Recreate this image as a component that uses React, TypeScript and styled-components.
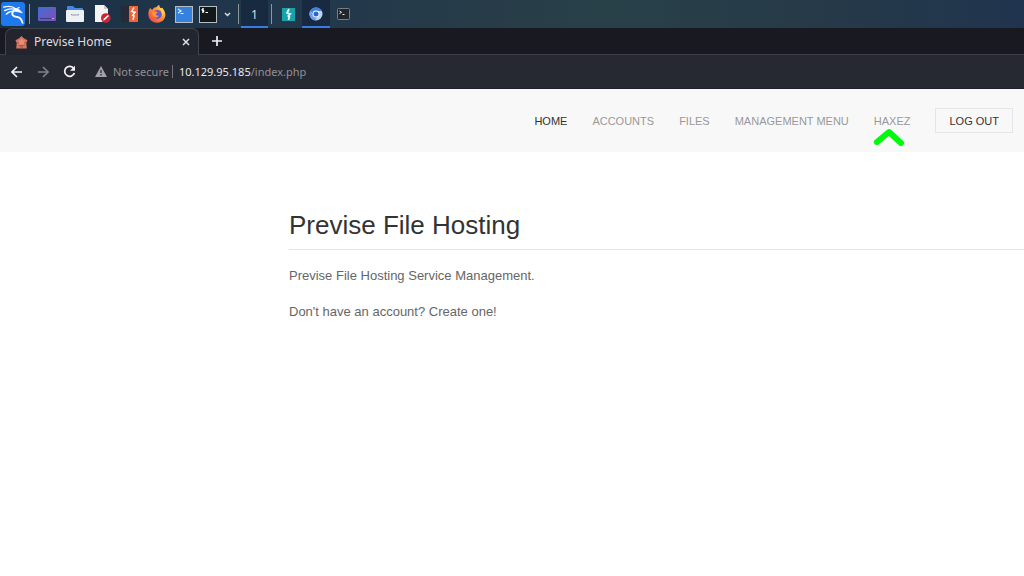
import React from 'react';
import styled, { createGlobalStyle } from 'styled-components';

const GlobalStyle = createGlobalStyle`
  *, *::before, *::after { box-sizing: border-box; }
  body { margin: 0; background: #fff; font-family: "Liberation Sans", Arial, sans-serif; }
  button { margin: 0; padding: 0; border: 0; background: none; font: inherit; color: inherit; }
  a { color: inherit; text-decoration: none; }
  svg { display: block; flex: none; }
`;

const Panel = styled.header`
  display: flex;
  align-items: center;
  height: 28px;
  background: linear-gradient(90deg, #1b3046 0%, #22384c 30%, #273c48 48%, #284149 60%, #263a48 78%, #20344f 100%);
  color: #d7dde2;
  font: 12px "Noto Sans", sans-serif;
`;

const PanelButton = styled.button<{ $width?: number; $active?: boolean }>`
  display: flex;
  align-items: center;
  justify-content: center;
  width: ${p => p.$width ?? 27}px;
  height: 28px;
  border-top: 2px solid transparent;
  border-bottom: 2px solid ${p => (p.$active ? '#397be0' : 'transparent')};
  background: ${p => (p.$active ? '#182a40' : 'transparent')};
`;

const PanelDivider = styled.span`
  width: 1px;
  height: 20px;
  margin: 0 2px 0 3px;
  background: #8a979f;
`;

const TabStrip = styled.div`
  display: flex;
  height: 27px;
  padding-left: 5px;
  background: #181921;
  border-bottom: 1px solid #3c4048;
`;

const Tab = styled.div`
  display: flex;
  align-items: center;
  width: 194px;
  height: 27px;
  padding: 0 4px 0 9px;
  border: 1px solid #40454d;
  border-bottom: 0;
  border-radius: 7px 7px 0 0;
  background: #22252d;
  color: #dcdde0;
  font: 12px "Noto Sans", sans-serif;
`;

const TabTitle = styled.span`
  flex: 1;
  padding: 0 0 2px 6px;
`;

const IconButton = styled.button<{ $width?: number }>`
  display: flex;
  align-items: center;
  justify-content: center;
  width: ${p => p.$width ?? 16}px;
  height: 26px;
`;

const Toolbar = styled.div`
  display: flex;
  align-items: center;
  gap: 10px;
  height: 34px;
  padding-left: 9px;
  background: #262932;
  border-bottom: 1px solid #1e2027;
`;

const AddressBar = styled.form`
  display: flex;
  flex: 1;
  align-items: center;
  margin-left: 8px;
  color: #8f9297;
  font: 11px "Noto Sans", sans-serif;
`;

const Security = styled.span`
  padding: 0 3px 0 6px;
`;

const AddressDivider = styled.span`
  width: 1px;
  height: 13px;
  margin-right: 6px;
  background: #73767c;
`;

const Host = styled.span`
  color: #e6e7e9;
`;

const SiteNav = styled.nav`
  display: flex;
  align-items: center;
  justify-content: flex-end;
  gap: 25px;
  height: 63px;
  padding-right: 11px;
  background: #f8f8f8;
  font-size: 11px;
  text-transform: uppercase;
`;

const NavLink = styled.a<{ $active?: boolean }>`
  position: relative;
  color: ${p => (p.$active ? '#333' : '#999')};
`;

const Marker = styled.svg`
  position: absolute;
  top: 100%;
  left: -1px;
`;

const LogOut = styled.button`
  height: 25px;
  padding: 0 13px;
  border: 1px solid #e5e5e5;
  color: #333;
  text-transform: uppercase;
`;

const Content = styled.main`
  padding: 56px 0 0 289px;
  color: #666;
  font-size: 13px;
  line-height: 20px;
`;

const Heading = styled.h1`
  margin: 0 0 16px;
  padding-bottom: 7px;
  border-bottom: 1px solid #e5e5e5;
  color: #333;
  font-size: 26px;
  font-weight: 400;
  line-height: 34px;
`;

const Paragraph = styled.p`
  margin: 0 0 16px;
`;

const KaliIcon = () => (
  <svg width="24" height="24" viewBox="0 0 23 23" fill="none" stroke="#fff" strokeLinecap="round">
    <rect width="23" height="23" rx="3" fill="#1e79ed" stroke="none" />
    <path d="M2.5 5C7 3.6 11 4 14.5 6.7M3.5 8.3C8 6 12 6.5 15 8M5 11.7C7 9.6 9.5 8.7 12 8.7" strokeWidth="1.2" />
    <path d="M12 8.5C9 12 12 14 15 14.2C19 14.5 20 17.2 20.7 20" strokeWidth="1.7" />
    <path d="M13.5 6.2L17 7L20.5 10.2L18.5 10.1L16 9.3L13 9.2Z" fill="#fff" strokeWidth=".6" />
    <path d="M15.3 6.3L17.5 5.2" />
  </svg>
);

const DesktopIcon = () => (
  <svg width="18" height="16" viewBox="0 0 18 16">
    <defs><linearGradient id="screen" x2="1" y2="1"><stop stopColor="#436bd8" /><stop offset="1" stopColor="#824fb4" /></linearGradient></defs>
    <rect y="1" width="18" height="14" rx="1" fill="url(#screen)" />
    <path d="M2 12.5h11" stroke="#373d83" /><path d="M14 12.5h2" stroke="#b8a4dc" />
  </svg>
);

const FolderIcon = () => (
  <svg width="18" height="18" viewBox="0 0 18 18">
    <path d="M1 2q0-1 1-1h5l2 2h7q1 0 1 1v4H1z" fill="#4687df" />
    <rect y="5" width="18" height="12" rx="1" fill="#edf1f4" />
    <path d="M5.5 9v1h7V9" fill="none" stroke="#8c9ba7" />
  </svg>
);

const EditorIcon = () => (
  <svg width="18" height="18" viewBox="0 0 18 18">
    <path d="M2 0h9l4 4v13H2z" fill="#f4f4f4" /><path d="M11 0l4 4h-4z" fill="#c7cbce" />
    <circle cx="12.8" cy="13" r="4.8" fill="#ca2631" />
    <path d="M10.2 15.7l.7-2.1 4-3.7 1.1 1.1-3.9 3.8z" fill="#fff" />
  </svg>
);

const BurpIcon = () => (
  <svg width="17" height="16" viewBox="0 0 17 16">
    <rect width="17" height="16" rx="2" fill="#282a36" />
    <path d="M8 0h9v16H8z" fill="#f16336" />
    <path d="M13 1.5l-2.4 4 3.5.8-2.5 3.1 1.5.6-1.1 4" fill="none" stroke="#fff" strokeWidth="1.4" />
  </svg>
);

const FirefoxIcon = () => (
  <svg width="18" height="18" viewBox="0 0 18 18">
    <defs><linearGradient id="flame" x1="1" x2="0" y2="1"><stop stopColor="#ffe552" /><stop offset=".4" stopColor="#ff9b35" /><stop offset="1" stopColor="#ee354f" /></linearGradient></defs>
    <path d="M2 3L4.3 5C5 3 7 2 9 2C9 1 10.1 0 11.3 0C11.3 2 12.2 2.6 13.5 4L14 2.5C18 7 18.3 11 15.8 14.6C12.4 19.2 4.7 18.6 1.5 13.8C-.2 10.8 0 6.4 2 3Z" fill="url(#flame)" />
    <circle cx="9.4" cy="9.4" r="4.3" fill="#7057c7" />
    <path d="M4.3 7.3C6 6 8.5 6.4 10 7.7L8 8.6C7.5 10.3 9 11.2 10.8 10.5C9.5 13.5 5.7 13.2 4.7 10Z" fill="#ff953b" />
    <path d="M10.5 3C13 5 15 7.5 14 11C16.5 9 16.4 5.7 14 3Z" fill="#ffd34f" />
  </svg>
);

const TerminalIcon = ({ blue = false }: { blue?: boolean }) => (
  <svg width="18" height="17" viewBox="0 0 18 17">
    <rect x=".5" y=".5" width="17" height="16" fill={blue ? '#3481df' : '#101819'} stroke="#b5bdc2" />
    {blue
      ? <path d="M3 3l3 2-3 2M5.5 7.5h3" fill="none" stroke="#e7f1ff" strokeWidth="1.2" />
      : <path d="M4.8 3H3v1.5h1.8V6H3M4 2v5M6.5 6.5h2.5" fill="none" stroke="#fff" />}
  </svg>
);

const TealBurpIcon = () => (
  <svg width="13" height="13" viewBox="0 0 13 13">
    <rect width="13" height="13" fill="#19a2a8" />
    <path d="M7 1L5 5l3.3 1-2 2 1 .7-.8 3.3" fill="none" stroke="#f0ffff" strokeWidth="1.7" />
  </svg>
);

const ChromiumIcon = () => (
  <svg width="14" height="14" viewBox="0 0 14 14">
    <circle cx="7" cy="7" r="6.5" fill="#bdd2f5" />
    <path d="M1.3 3.7A6.5 6.5 0 0 1 12.8 4H7A3 3 0 0 0 4 7z" fill="#447fde" />
    <path d="M1.3 3.7A6.5 6.5 0 0 0 6 13.4L8.2 10 4 8z" fill="#6d9feb" />
    <circle cx="7" cy="7" r="3.4" fill="#fff" /><circle cx="7" cy="7" r="2.5" fill="#2868ce" />
  </svg>
);

const SmallTerminalIcon = () => (
  <svg width="13" height="12" viewBox="0 0 13 12">
    <rect x=".5" y=".5" width="12" height="11" rx="1" fill="#20262b" stroke="#788087" />
    <path d="M2.5 3l2 1.3-2 1.3M5.5 6.5h2" fill="none" stroke="#eceff1" />
  </svg>
);

const FavIcon = () => (
  <svg width="13" height="13" viewBox="0 0 13 13">
    <path d="M6.5 0l2.3 2.2 3.7 2-1.2 3 .5 5.3H1.2l.5-5.3-1.2-3 3.7-2z" fill="#d77562" />
    <path d="M6.5 2l1.2 2.3 2.8.4-2 1.9.5 2.7-2.5-1.2L4 9.3l.5-2.7-2-1.9 2.8-.4z" fill="#e88f79" />
    <path d="M1.5 6l2.3 1M11.5 6L9.2 7M3.5 9.5h6M5 11h3" fill="none" stroke="#96534a" strokeWidth=".8" />
  </svg>
);

const Arrow = ({ forward = false }: { forward?: boolean }) => (
  <svg width="12" height="12" viewBox="0 0 12 12" fill="none" stroke={forward ? '#7e8188' : '#f0f1f2'} strokeWidth="1.6">
    <path d={forward ? 'M1 6h10M6 1l5 5-5 5' : 'M11 6H1M6 1L1 6l5 5'} />
  </svg>
);

const ReloadIcon = () => (
  <svg width="13" height="13" viewBox="0 0 13 13">
    <path d="M10.8 3.5A5 5 0 1 0 11.4 8" fill="none" stroke="#f0f1f2" strokeWidth="1.8" />
    <path d="M12 .8v5H7z" fill="#f0f1f2" />
  </svg>
);

const WarningIcon = () => (
  <svg width="12" height="11" viewBox="0 0 12 11">
    <path d="M6 0l6 11H0z" fill="#a0a2a6" /><path d="M6 4v3M6 8v1.4" stroke="#262932" strokeWidth="1.2" />
  </svg>
);

export default function App() {
  return (
    <>
      <GlobalStyle />
      <Panel>
        <PanelButton $width={26} aria-label="Applications"><KaliIcon /></PanelButton>
        <PanelDivider />
        <PanelButton $width={30} aria-label="Show desktop"><DesktopIcon /></PanelButton>
        <PanelButton $width={26} aria-label="Files"><FolderIcon /></PanelButton>
        <PanelButton $width={28} aria-label="Text editor"><EditorIcon /></PanelButton>
        <PanelButton aria-label="Burp Suite"><BurpIcon /></PanelButton>
        <PanelButton aria-label="Firefox"><FirefoxIcon /></PanelButton>
        <PanelButton aria-label="PowerShell"><TerminalIcon blue /></PanelButton>
        <PanelButton $width={22} aria-label="Terminal"><TerminalIcon /></PanelButton>
        <PanelButton $width={16} aria-label="More terminals">
          <svg width="7" height="5" viewBox="0 0 7 5" fill="none" stroke="#dce2e6" strokeWidth="1.4"><path d="M1 1l2.5 2.5L6 1" /></svg>
        </PanelButton>
        <PanelDivider />
        <PanelButton $active>1</PanelButton>
        <PanelDivider />
        <PanelButton $width={28} aria-label="Burp Suite window"><TealBurpIcon /></PanelButton>
        <PanelButton $width={28} $active aria-label="Chromium window"><ChromiumIcon /></PanelButton>
        <PanelButton aria-label="Terminal window"><SmallTerminalIcon /></PanelButton>
      </Panel>
      <TabStrip>
        <Tab>
          <FavIcon />
          <TabTitle>Previse Home</TabTitle>
          <IconButton aria-label="Close tab">
            <svg width="8" height="8" viewBox="0 0 8 8" stroke="#e1e2e4" strokeWidth="1.5"><path d="M1 1l6 6M7 1L1 7" /></svg>
          </IconButton>
        </Tab>
        <IconButton $width={36} aria-label="New tab">
          <svg width="10" height="10" viewBox="0 0 10 10" stroke="#f1f1f3" strokeWidth="1.7"><path d="M5 0v10M0 5h10" /></svg>
        </IconButton>
      </TabStrip>
      <Toolbar>
        <IconButton aria-label="Back"><Arrow /></IconButton>
        <IconButton aria-label="Forward" disabled><Arrow forward /></IconButton>
        <IconButton aria-label="Reload"><ReloadIcon /></IconButton>
        <AddressBar>
          <WarningIcon />
          <Security>Not secure</Security>
          <AddressDivider />
          <span><Host>10.129.95.185</Host>/index.php</span>
        </AddressBar>
      </Toolbar>
      <SiteNav>
        <NavLink href="#home" $active>Home</NavLink>
        <NavLink href="#accounts">Accounts</NavLink>
        <NavLink href="#files">Files</NavLink>
        <NavLink href="#management">Management Menu</NavLink>
        <NavLink href="#haxez">
          haxez
          <Marker width="32" height="20" viewBox="0 0 32 20" fill="none" stroke="#00fa0c" strokeWidth="6" strokeLinecap="round" strokeLinejoin="round">
            <path d="M4 15Q11 9 16 5L28 16" />
          </Marker>
        </NavLink>
        <LogOut>Log Out</LogOut>
      </SiteNav>
      <Content>
        <Heading>Previse File Hosting</Heading>
        <Paragraph>Previse File Hosting Service Management.</Paragraph>
        <Paragraph>Don't have an account? Create one!</Paragraph>
      </Content>
    </>
  );
}
